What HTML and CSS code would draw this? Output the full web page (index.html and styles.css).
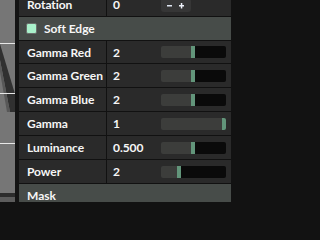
FILE: index.html
```html
<!DOCTYPE html>
<html>
<head>
<meta charset="utf-8">
<link rel="stylesheet" href="styles.css">
</head>
<body>
<div class="screen">
  <div class="canvas">
    <svg width="15" height="202" viewBox="0 0 15 202">
      <rect x="0" y="0" width="15" height="202" fill="#767676"/>
      <polygon points="0,44 0,60 10,112 15,112 15,94" fill="#303030"/>
      <polygon points="0,60 0,72 7,112 10,112" fill="#585858"/>
      <rect x="0" y="43" width="15" height="1" fill="#e8e8e8"/>
      <rect x="0" y="93" width="15" height="1" fill="#e8e8e8"/>
      <rect x="0" y="143" width="15" height="1" fill="#e8e8e8"/>
      <rect x="0" y="193" width="15" height="4" fill="#2c2c2c"/>
      <rect x="0" y="197" width="15" height="5" fill="#5c5c5c"/>
    </svg>
  </div>
  <div class="gutter"></div>
  <div class="panel">
    <div class="row rotation">
      <div class="label">Rotation</div>
      <div class="value">0</div>
      <div class="ctrl">
        <div class="stepper">
          <svg width="30" height="14" viewBox="0 0 30 14">
            <rect x="6" y="7" width="5" height="1.5" fill="#dfe6f2"/>
            <rect x="18" y="7" width="5" height="1.5" fill="#eef2fa"/>
            <rect x="19.8" y="5" width="1.5" height="5.5" fill="#eef2fa"/>
          </svg>
        </div>
      </div>
    </div>
    <div class="header">
      <span class="check"></span>
      <span class="htext">Soft Edge</span>
    </div>
    <div class="row first">
      <div class="label">Gamma Red</div>
      <div class="value">2</div>
      <div class="ctrl"><div class="slider"><div class="fill" style="width:30px"></div><div class="knob"></div><div class="rest"></div></div></div>
    </div>
    <div class="row">
      <div class="label">Gamma Green</div>
      <div class="value">2</div>
      <div class="ctrl"><div class="slider"><div class="fill" style="width:30px"></div><div class="knob"></div><div class="rest"></div></div></div>
    </div>
    <div class="row">
      <div class="label">Gamma Blue</div>
      <div class="value">2</div>
      <div class="ctrl"><div class="slider"><div class="fill" style="width:30px"></div><div class="knob"></div><div class="rest"></div></div></div>
    </div>
    <div class="row">
      <div class="label">Gamma</div>
      <div class="value">1</div>
      <div class="ctrl"><div class="slider"><div class="fill" style="width:61px"></div><div class="knob"></div><div class="rest"></div></div></div>
    </div>
    <div class="row">
      <div class="label">Luminance</div>
      <div class="value">0.500</div>
      <div class="ctrl"><div class="slider"><div class="fill" style="width:30px"></div><div class="knob"></div><div class="rest"></div></div></div>
    </div>
    <div class="row">
      <div class="label">Power</div>
      <div class="value">2</div>
      <div class="ctrl"><div class="slider"><div class="fill" style="width:16px"></div><div class="knob"></div><div class="rest"></div></div></div>
    </div>
    <div class="header">
      <span class="htext mask">Mask</span>
    </div>
  </div>
  <div class="edge"></div>
</div>
</body>
</html>
```

FILE: styles.css
```css
html, body {
  margin: 0;
  padding: 0;
  background: #121212;
  overflow: hidden;
}

.screen {
  display: flex;
  width: 239px;
  height: 202px;
  overflow: hidden;
  font-family: "Lato", "Liberation Sans", sans-serif;
  font-weight: 700;
  font-size: 12px;
  letter-spacing: -0.05px;
  color: #f6f6f6;
}

.canvas {
  width: 15px;
  flex: none;
  display: flex;
}

.canvas svg {
  display: block;
}

.gutter {
  width: 4px;
  flex: none;
  background: #141414;
}

.panel {
  width: 212px;
  flex: none;
  display: flex;
  flex-direction: column;
  background: #111;
}

.edge {
  flex: 1;
  background: #121212;
}

.row {
  display: flex;
  height: 23px;
  flex: none;
  background: #2a2a2a;
  border-bottom: 1px solid #111;
}

.row.rotation {
  margin-top: -7px;
}

.row.first {
  height: 22px;
}

.label {
  width: 79px;
  flex: none;
  padding-left: 8px;
  border-right: 1px solid #111;
  display: flex;
  align-items: center;
  white-space: nowrap;
}

.value {
  width: 48px;
  flex: none;
  padding-left: 6px;
  display: flex;
  align-items: center;
}

.ctrl {
  width: 65px;
  flex: none;
  display: flex;
  align-items: center;
}

.stepper {
  width: 30px;
  height: 14px;
  background: #363636;
  border-radius: 3px;
}

.stepper svg {
  display: block;
}

.slider {
  width: 65px;
  height: 12px;
  display: flex;
  border-radius: 2px;
  overflow: hidden;
}

.fill {
  flex: none;
  background: #3c3d3b;
}

.knob {
  width: 4px;
  flex: none;
  background: #62957a;
}

.rest {
  flex: 1;
  background: #0a0a0a;
}

.header {
  height: 23px;
  flex: none;
  display: flex;
  align-items: center;
  padding-left: 7px;
  background: #474c49;
  border-bottom: 1px solid #111;
}

.check {
  width: 9px;
  height: 9px;
  border: 1px solid #6b6f6c;
  border-radius: 2px;
  background: #a9f2cb;
  margin-right: 7px;
}

.htext {
  color: #f6f6f6;
}

.htext.mask {
  padding-left: 1px;
}
```
